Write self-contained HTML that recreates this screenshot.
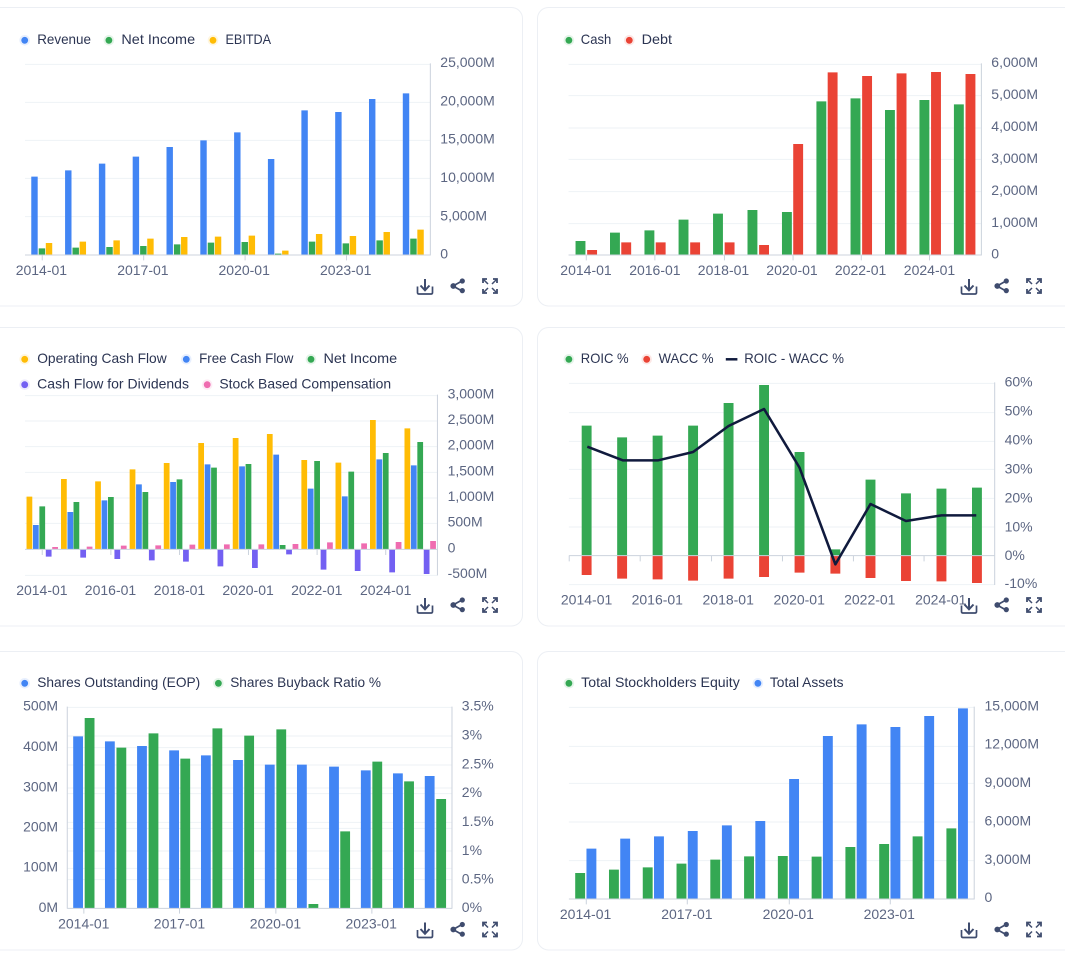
<!DOCTYPE html>
<html><head><meta charset="utf-8"><style>
html,body{margin:0;padding:0;background:#fff;overflow:hidden}
svg{display:block}
text{font-family:"Liberation Sans",sans-serif;font-size:14px}
.l{fill:#2b3452}
.a{fill:#5c6682}
.m{text-anchor:middle}
.e{text-anchor:end}
.g{stroke:#eef2f6;stroke-width:3;fill:none}
.x{stroke:#ccd3dd;stroke-width:3;fill:none}
.t{stroke:#ccd3dd;stroke-width:3;fill:none}
.b{fill:none;stroke-width:19}
.w{fill:none;stroke-width:29}
.p{fill:none;stroke-width:17}
.blue{stroke:#4285f4}.green{stroke:#34a853}.yel{stroke:#ffbc05}.red{stroke:#ea4335}.pur{stroke:#7360f2}.pink{stroke:#ef6cb0}
.card{fill:#fff;stroke:#eceff4;stroke-width:1}
</style></head><body>
<svg xmlns="http://www.w3.org/2000/svg" width="1065" height="965" viewBox="0 0 1065 965">
<defs>
<g id="ic" fill="none" stroke="#3f4c6e" stroke-width="1.7">
<path d="M-7.5 -.5V5.5Q-7.5 7 -6 7H6Q7.5 7 7.5 5.5V-.5" transform="translate(0 .5)"/>
<path d="M0 -7.5V3M-4.5 -1L0 3.8L4.5 -1" stroke-width="2"/>
<g transform="translate(33 -.5)">
<path d="M-5 0L4 -5M-5 0L4 5"/>
<circle cx="-4.7" cy="0" r="2.9" fill="#3f4c6e" stroke="none"/><circle cx="4.3" cy="-5" r="2.6" fill="#3f4c6e" stroke="none"/><circle cx="4.3" cy="4.6" r="2.6" fill="#3f4c6e" stroke="none"/>
</g>
<g transform="translate(65 -.5)" stroke-width="1.5">
<path d="M-2 -2L-6.5 -6.5M2 -2L6.5 -6.5M-2 2L-6.5 6.5M2 2L6.5 6.5"/>
<path d="M-7 -3V-7H-3M7 -3V-7H3M-7 3V7H-3M7 3V7H3" stroke-width="1.8"/>
</g>
</g>
</defs>

<rect class="card" x="-12" y="7.5" width="534.5" height="298.5" rx="11"/>
<rect class="card" x="537.5" y="7.5" width="540" height="298.5" rx="11"/>
<rect class="card" x="-12" y="327.5" width="534.5" height="298.5" rx="11"/>
<rect class="card" x="537.5" y="327.5" width="540" height="298.5" rx="11"/>
<rect class="card" x="-12" y="651.5" width="534.5" height="298.5" rx="11"/>
<rect class="card" x="537.5" y="651.5" width="540" height="298.5" rx="11"/>

<!-- Chart 1 -->
<g transform="scale(.33806 .33333)">
<path class="g" d="M74 193H1273M74 307H1273M74 421H1273M74 535H1273M74 650H1273"/>
<path class="b blue" d="M102 765V530M202 765V511M302 765V491M402 765V470M502 765V441M602 765V421M702 765V397M802 765V477M901 765V331M1001 765V336M1101 765V297M1201 765V280"/>
<path class="b green" d="M124 765V745M224 765V743M324 765V741M424 765V738M524 765V733M624 765V728M724 765V726M823 765V761M923 765V725M1023 765V730M1123 765V721M1223 765V716"/>
<path class="b yel" d="M145 765V729M245 765V725M345 765V721M445 765V716M545 765V711M645 765V710M745 765V707M844 765V752M944 765V702M1044 765V708M1144 765V696M1244 765V689"/>
<path class="x" d="M74 765H1274M1273 190V766"/>
<path class="t" d="M125 765V781M425 765V781M725 765V781M1025 765V781"/>
</g>
<circle cx="24.7" cy="40.3" r="5.3" fill="#4285f4" opacity=".13"/><circle cx="24.7" cy="40.3" r="3.4" fill="#4285f4"/>
<circle cx="108.9" cy="40.3" r="5.3" fill="#34a853" opacity=".13"/><circle cx="108.9" cy="40.3" r="3.4" fill="#34a853"/>
<circle cx="213" cy="40.3" r="5.3" fill="#ffbc05" opacity=".13"/><circle cx="213" cy="40.3" r="3.4" fill="#ffbc05"/>
<text class="l" x="37.2" y="44" textLength="53.8" lengthAdjust="spacingAndGlyphs">Revenue</text><text class="l" x="121.4" y="44" textLength="73.7" lengthAdjust="spacingAndGlyphs">Net Income</text><text class="l" x="225.5" y="44" textLength="45.6" lengthAdjust="spacingAndGlyphs">EBITDA</text>
<text class="a" x="440.3" y="67">25,000M</text><text class="a" x="440.3" y="105.3">20,000M</text><text class="a" x="440.3" y="143.7">15,000M</text><text class="a" x="440.3" y="182">10,000M</text><text class="a" x="440.3" y="220.7">5,000M</text><text class="a" x="440.3" y="258.3">0</text>
<text class="a m" x="41.4" y="275">2014-01</text><text class="a m" x="142.9" y="275">2017-01</text><text class="a m" x="244.2" y="275">2020-01</text><text class="a m" x="345.7" y="275">2023-01</text>
<use href="#ic" x="425" y="286.5"/>

<!-- Chart 2 -->
<g transform="translate(530 0) scale(.34118 .33333)">
<path class="g" d="M113 193H1323M113 287H1323M113 384H1323M113 478H1323M113 575H1323M113 671H1323"/>
<path class="w green" d="M148 765V723M249 765V698M350 765V691M450 765V659M551 765V641M652 765V630M753 765V636M854 765V304M954 765V295M1055 765V330M1156 765V300M1257 765V313"/>
<path class="w red" d="M182 765V750M282 765V727M383 765V727M484 765V727M585 765V727M686 765V735M786 765V432M887 765V217M988 765V228M1089 765V220M1190 765V216M1291 765V222"/>
<path class="x" d="M113 765H1324M1323 190V766"/>
<path class="t" d="M165 765V781M366 765V781M570 765V781M771 765V781M971 765V781M1171 765V781"/>
</g>
<circle cx="568.9" cy="40.3" r="5.3" fill="#34a853" opacity=".13"/><circle cx="568.9" cy="40.3" r="3.4" fill="#34a853"/>
<circle cx="629.3" cy="40.3" r="5.3" fill="#ea4335" opacity=".13"/><circle cx="629.3" cy="40.3" r="3.4" fill="#ea4335"/>
<text class="l" x="580.8" y="44" textLength="30.4" lengthAdjust="spacingAndGlyphs">Cash</text><text class="l" x="641.6" y="44" textLength="30.4" lengthAdjust="spacingAndGlyphs">Debt</text>
<text class="a" x="991.3" y="67">6,000M</text><text class="a" x="991.3" y="99">5,000M</text><text class="a" x="991.3" y="131">4,000M</text><text class="a" x="991.3" y="163">3,000M</text><text class="a" x="991.3" y="195">2,000M</text><text class="a" x="991.3" y="227">1,000M</text><text class="a" x="991.3" y="258.3">0</text>
<text class="a m" x="586" y="275">2014-01</text><text class="a m" x="654.9" y="275">2016-01</text><text class="a m" x="723.5" y="275">2018-01</text><text class="a m" x="792" y="275">2020-01</text><text class="a m" x="860.6" y="275">2022-01</text><text class="a m" x="929.5" y="275">2024-01</text>
<use href="#ic" x="969" y="286.5"/>

<!-- Chart 3 -->
<g transform="translate(0 320) scale(.33806 .33333)">
<path class="g" d="M74 227H1294M74 303H1294M74 380H1294M74 457H1294M74 534H1294M74 610H1294M74 766H1294"/>
<path class="p yel" d="M87 688V530M189 688V477M290 688V484M392 688V448M493 688V429M595 688V369M697 688V354M798 688V342M900 688V420M1001 688V428M1103 688V300M1205 688V325"/>
<path class="p blue" d="M106 688V615M208 688V576M309 688V541M411 688V493M512 688V486M614 688V433M716 688V439M817 688V404M919 688V506M1020 688V529M1122 688V418M1224 688V436"/>
<path class="p green" d="M125 688V559M226 688V546M328 688V531M430 688V516M531 688V478M633 688V443M735 688V432M836 688V675M938 688V423M1039 688V455M1141 688V399M1243 688V366"/>
<path class="p pur" d="M144 688V710M246 688V713M347 688V717M449 688V721M550 688V725M652 688V739M754 688V744M855 688V703M957 688V749M1058 688V753M1160 688V757M1262 688V762"/>
<path class="p pink" d="M163 688V681M265 688V680M366 688V677M468 688V676M569 688V674M671 688V673M773 688V673M874 688V672M976 688V667M1077 688V670M1179 688V666M1281 688V663"/>
<path class="x" d="M74 688H1294M1294 224V766"/>
<path class="t" d="M125 688V705M328 688V705M531 688V705M735 688V705M938 688V705M1141 688V705"/>
</g>
<circle cx="24.7" cy="359.3" r="5.3" fill="#ffbc05" opacity=".13"/><circle cx="24.7" cy="359.3" r="3.4" fill="#ffbc05"/>
<circle cx="186.3" cy="359.3" r="5.3" fill="#4285f4" opacity=".13"/><circle cx="186.3" cy="359.3" r="3.4" fill="#4285f4"/>
<circle cx="311" cy="359.3" r="5.3" fill="#34a853" opacity=".13"/><circle cx="311" cy="359.3" r="3.4" fill="#34a853"/>
<circle cx="24.7" cy="384.7" r="5.3" fill="#7360f2" opacity=".13"/><circle cx="24.7" cy="384.7" r="3.4" fill="#7360f2"/>
<circle cx="207.2" cy="384.7" r="5.3" fill="#ef6cb0" opacity=".13"/><circle cx="207.2" cy="384.7" r="3.4" fill="#ef6cb0"/>
<text class="l" x="37.2" y="363" textLength="129.5" lengthAdjust="spacingAndGlyphs">Operating Cash Flow</text><text class="l" x="199.1" y="363" textLength="94.3" lengthAdjust="spacingAndGlyphs">Free Cash Flow</text><text class="l" x="323.5" y="363" textLength="73.7" lengthAdjust="spacingAndGlyphs">Net Income</text>
<text class="l" x="37.2" y="388.6" textLength="151.8" lengthAdjust="spacingAndGlyphs">Cash Flow for Dividends</text><text class="l" x="219.4" y="388.6" textLength="171.7" lengthAdjust="spacingAndGlyphs">Stock Based Compensation</text>
<text class="a" x="447.6" y="398.3">3,000M</text><text class="a" x="447.6" y="424">2,500M</text><text class="a" x="447.6" y="449.7">2,000M</text><text class="a" x="447.6" y="475.3">1,500M</text><text class="a" x="447.6" y="501">1,000M</text><text class="a" x="447.6" y="526.7">500M</text><text class="a" x="447.6" y="552.3">0</text><text class="a" x="447.6" y="578">-500M</text>
<text class="a m" x="41.9" y="595">2014-01</text><text class="a m" x="110.5" y="595">2016-01</text><text class="a m" x="179.5" y="595">2018-01</text><text class="a m" x="248.1" y="595">2020-01</text><text class="a m" x="316.8" y="595">2022-01</text><text class="a m" x="385.7" y="595">2024-01</text>
<use href="#ic" x="425" y="605.5"/>

<!-- Chart 4 -->
<g transform="translate(530 320) scale(.34118 .33333)">
<path class="g" d="M114 190H1362M114 278H1362M114 364H1362M114 448H1362M114 535H1362M114 621H1362M114 794H1362"/>
<path class="w green" d="M166 707V317M270 707V352M374 707V347M478 707V317M582 707V249M686 707V195M790 707V396M895 707V688M998 707V479M1102 707V520M1206 707V506M1310 707V503"/>
<path class="w red" d="M166 707V765M270 707V776M374 707V778M478 707V782M582 707V776M686 707V771M790 707V758M895 707V761M998 707V774M1102 707V783M1206 707V784M1310 707V789"/>
<path class="x" d="M114 707H1362M1362 187V795"/>
<path class="t" d="M115 707V724M323 707V724M532 707V724M740 707V724M948 707V724M1155 707V724"/>
<path d="M168 380L272 421L376 421L478 396L582 318L686 267L790 443L895 733L998 552L1102 603L1206 586L1308 586" fill="none" stroke="#101a3d" stroke-width="7.5" stroke-linejoin="round"/>
</g>
<circle cx="568.9" cy="359.3" r="5.3" fill="#34a853" opacity=".13"/><circle cx="568.9" cy="359.3" r="3.4" fill="#34a853"/>
<circle cx="646.7" cy="359.3" r="5.3" fill="#ea4335" opacity=".13"/><circle cx="646.7" cy="359.3" r="3.4" fill="#ea4335"/>
<path d="M725.8 359.3H737.4" stroke="#101a3d" stroke-width="2.5"/>
<text class="l" x="580.8" y="363" textLength="47.8" lengthAdjust="spacingAndGlyphs">ROIC %</text><text class="l" x="658.6" y="363" textLength="54.9" lengthAdjust="spacingAndGlyphs">WACC %</text><text class="l" x="744.3" y="363" textLength="99.6" lengthAdjust="spacingAndGlyphs">ROIC - WACC %</text>
<text class="a" x="1004.6" y="386.3">60%</text><text class="a" x="1004.6" y="415.3">50%</text><text class="a" x="1004.6" y="444.3">40%</text><text class="a" x="1004.6" y="473.3">30%</text><text class="a" x="1004.6" y="502.3">20%</text><text class="a" x="1004.6" y="531.3">10%</text><text class="a" x="1004.6" y="560">0%</text><text class="a" x="1004.6" y="588">-10%</text>
<text class="a m" x="586.6" y="604.7">2014-01</text><text class="a m" x="657.3" y="604.7">2016-01</text><text class="a m" x="728.2" y="604.7">2018-01</text><text class="a m" x="799.2" y="604.7">2020-01</text><text class="a m" x="869.8" y="604.7">2022-01</text><text class="a m" x="940.8" y="604.7">2024-01</text>
<use href="#ic" x="969" y="605.5"/>

<!-- Chart 5 -->
<g transform="translate(0 645) scale(.33806 .33333)">
<path class="g" d="M199 187H1337M199 273H1337M199 308H1337M199 360H1337M199 429H1337M199 446H1337M199 532H1337M199 550H1337M199 618H1337M199 670H1337M199 704H1337"/>
<path class="w blue" d="M231 790V274M325 790V289M420 790V303M515 790V316M609 790V331M704 790V345M798 790V359M893 790V359M988 790V365M1082 790V376M1177 790V385M1271 790V393"/>
<path class="w green" d="M265 790V219M359 790V308M454 790V265M548 790V341M643 790V250M737 790V272M832 790V253M927 790V777M1021 790V559M1116 790V350M1210 790V409M1305 790V462"/>
<path class="x" d="M199 185V791M1337 185V791M199 790H1337"/>
<path class="t" d="M248 790V806M531 790V806M816 790V806M1100 790V806"/>
</g>
<circle cx="24.7" cy="683.3" r="5.3" fill="#4285f4" opacity=".13"/><circle cx="24.7" cy="683.3" r="3.4" fill="#4285f4"/>
<circle cx="218.4" cy="683.3" r="5.3" fill="#34a853" opacity=".13"/><circle cx="218.4" cy="683.3" r="3.4" fill="#34a853"/>
<text class="l" x="37.2" y="687" textLength="163" lengthAdjust="spacingAndGlyphs">Shares Outstanding (EOP)</text><text class="l" x="230.2" y="687" textLength="150.8" lengthAdjust="spacingAndGlyphs">Shares Buyback Ratio %</text>
<text class="a e" x="58.1" y="710.3">500M</text><text class="a e" x="58.1" y="751">400M</text><text class="a e" x="58.1" y="791.7">300M</text><text class="a e" x="58.1" y="831.7">200M</text><text class="a e" x="58.1" y="871.7">100M</text><text class="a e" x="58.1" y="912">0M</text>
<text class="a" x="461.8" y="710.3">3.5%</text><text class="a" x="461.8" y="739.3">3%</text><text class="a" x="461.8" y="768.3">2.5%</text><text class="a" x="461.8" y="797">2%</text><text class="a" x="461.8" y="826">1.5%</text><text class="a" x="461.8" y="855">1%</text><text class="a" x="461.8" y="883.7">0.5%</text><text class="a" x="461.8" y="912">0%</text>
<text class="a m" x="83.8" y="928.7">2014-01</text><text class="a m" x="179.5" y="928.7">2017-01</text><text class="a m" x="275.5" y="928.7">2020-01</text><text class="a m" x="371.2" y="928.7">2023-01</text>
<use href="#ic" x="425" y="930"/>

<!-- Chart 6 -->
<g transform="translate(530 645) scale(.34118 .33333)">
<path class="g" d="M114 187H1302M114 304H1302M114 415H1302M114 531H1302M114 647H1302"/>
<path class="w green" d="M147 762V684M246 762V674M345 762V667M444 762V656M543 762V644M642 762V634M741 762V633M840 762V635M939 762V606M1038 762V597M1136 762V574M1235 762V550"/>
<path class="w blue" d="M180 762V611M279 762V581M378 762V574M477 762V558M577 762V541M675 762V528M774 762V402M873 762V273M972 762V238M1071 762V246M1170 762V213M1269 762V190"/>
<path class="x" d="M114 762H1303M1302 185V763"/>
<path class="t" d="M165 762V778M461 762V778M760 762V778M1056 762V778"/>
</g>
<circle cx="568.9" cy="683.3" r="5.3" fill="#34a853" opacity=".13"/><circle cx="568.9" cy="683.3" r="3.4" fill="#34a853"/>
<circle cx="757.9" cy="683.3" r="5.3" fill="#4285f4" opacity=".13"/><circle cx="757.9" cy="683.3" r="3.4" fill="#4285f4"/>
<text class="l" x="581.2" y="687" textLength="158.6" lengthAdjust="spacingAndGlyphs">Total Stockholders Equity</text><text class="l" x="769.9" y="687" textLength="73.7" lengthAdjust="spacingAndGlyphs">Total Assets</text>
<text class="a" x="984.5" y="710.3">15,000M</text><text class="a" x="984.5" y="748.7">12,000M</text><text class="a" x="984.5" y="787">9,000M</text><text class="a" x="984.5" y="825.7">6,000M</text><text class="a" x="984.5" y="864">3,000M</text><text class="a" x="984.5" y="902">0</text>
<text class="a m" x="585.6" y="919">2014-01</text><text class="a m" x="686.9" y="919">2017-01</text><text class="a m" x="788.3" y="919">2020-01</text><text class="a m" x="889.3" y="919">2023-01</text>
<use href="#ic" x="969" y="930"/>
</svg>
</body></html>
